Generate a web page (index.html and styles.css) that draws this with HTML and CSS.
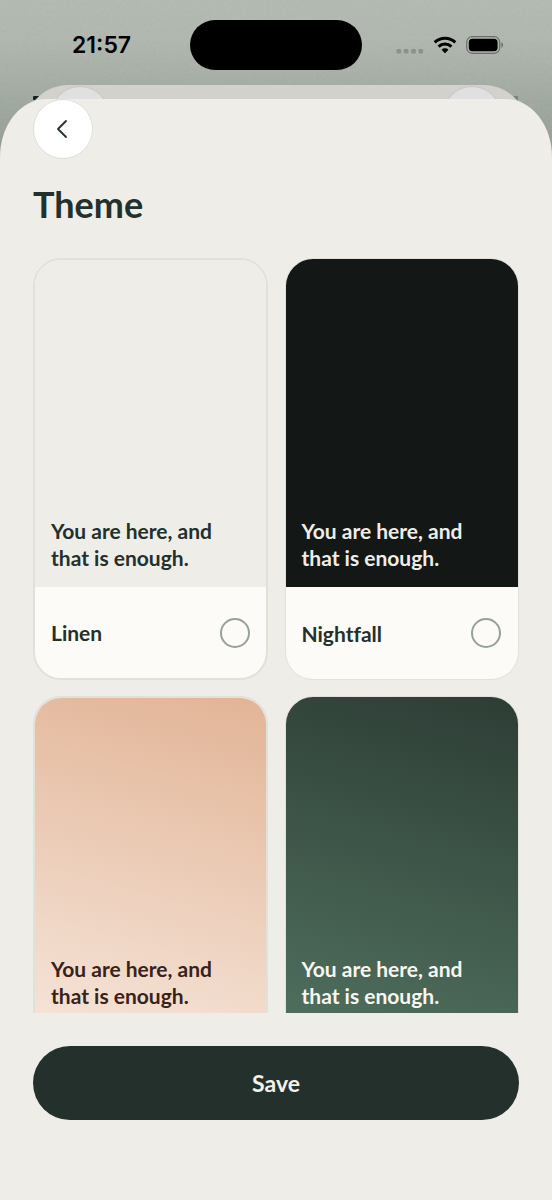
FILE: index.html
```html
<!DOCTYPE html>
<html lang="en">
<head>
<meta charset="utf-8">
<meta name="viewport" content="width=device-width, initial-scale=1">
<title>Theme</title>
<link rel="stylesheet" href="styles.css">
</head>
<body>
<div class="screen">
  <svg class="grain" aria-hidden="true">
    <filter id="grain"><feTurbulence type="fractalNoise" baseFrequency="0.3" numOctaves="2"/><feColorMatrix type="saturate" values="0"/></filter>
    <rect width="100%" height="100%" filter="url(#grain)"/>
  </svg>
  <div class="under-marks" aria-hidden="true"></div>
  <div class="under-sheet" aria-hidden="true"><span class="under-circle"></span><span class="under-circle"></span></div>

  <header class="status">
    <time class="clock">21:57</time>
    <div class="island"></div>
    <div class="status-icons">
      <svg width="28" height="6" viewBox="0 0 28 6" aria-label="No signal"><g fill="#8b928b"><rect x="0.5" y="1" width="4.6" height="4.5" rx="1.2"/><rect x="7.8" y="1" width="4.6" height="4.5" rx="1.2"/><rect x="15.2" y="1" width="4.6" height="4.5" rx="1.2"/><rect x="22.5" y="1" width="4.6" height="4.5" rx="1.2"/></g></svg>
      <svg width="24" height="18" viewBox="0 0 24 18" aria-label="Wi-Fi"><g fill="none" stroke="#000" stroke-width="3"><path d="M1.7 6.4a14.8 14.8 0 0 1 20.6 0"/><path d="M5.6 10.6a9.2 9.2 0 0 1 12.8 0"/></g><path d="M12 17.3l-3.5-3.5a5 5 0 0 1 7 0z"/></svg>
      <svg width="38" height="18" viewBox="0 0 38 18" aria-label="Battery full"><rect x="0.7" y="0.7" width="33" height="16.6" rx="5.5" fill="none" stroke="#687069" stroke-width="1.2"/><rect x="2.8" y="2.8" width="28.8" height="12.4" rx="3.6"/><path d="M35.4 6.3c2.2.8 2.2 4.6 0 5.4z" fill="#687069"/></svg>
    </div>
  </header>

  <main class="sheet">
    <button class="back" type="button" aria-label="Back">
      <svg width="12" height="20" viewBox="0 0 12 20" fill="none" stroke="#23302b" stroke-width="1.8" stroke-linecap="round" stroke-linejoin="round"><path d="M10 2L2 10l8 8"/></svg>
    </button>
    <h1 class="title">Theme</h1>
    <div class="themes">
      <label class="card">
        <span class="preview linen">You are here, and that is enough.</span>
        <span class="choice">Linen<input class="radio" type="radio" name="theme"></span>
      </label>
      <label class="card card-dark">
        <span class="preview nightfall">You are here, and that is enough.</span>
        <span class="choice">Nightfall<input class="radio" type="radio" name="theme"></span>
      </label>
      <label class="card">
        <span class="preview peach">You are here, and that is enough.</span>
      </label>
      <label class="card card-dark">
        <span class="preview forest">You are here, and that is enough.</span>
      </label>
    </div>
    <button class="save" type="button">Save</button>
  </main>
</div>
</body>
</html>
```
FILE: styles.css
```css
* { box-sizing: border-box; }

body {
  margin: 0;
  font-family: Lato, "Noto Sans", sans-serif;
  font-variant-ligatures: none;
  color: #23302b;
}

button { font: inherit; cursor: pointer; }

.screen {
  position: relative;
  display: flex;
  flex-direction: column;
  height: 100vh;
  overflow: hidden;
  background: linear-gradient(#b3bab2 0, #b0b7af 40px, #a0a9a0 100px, #8f998f 170px);
}

.grain {
  position: absolute;
  inset: 0 0 auto;
  width: 100%;
  height: 170px;
  opacity: 0.08;
}

/* Edges of the page and sheet stacked beneath the open sheet */
.under-marks {
  position: absolute;
  top: 96px;
  left: 33px;
  right: 34px;
  height: 4px;
  border: solid #17211d;
  border-width: 0 5px 0 8px;
  border-right-color: #7b847c;
  border-radius: 1px;
}

.under-sheet {
  position: absolute;
  top: 85px;
  left: 22px;
  right: 22px;
  height: 80px;
  display: flex;
  justify-content: space-between;
  padding: 1px 29px;
  background: #d2d1cc;
  border-radius: 46px 46px 0 0 / 50px 50px 0 0;
}

.under-circle {
  width: 58px;
  height: 58px;
  border: 1px solid #c7c6c0;
  border-radius: 50%;
  background: #e0e0e0;
}

.status {
  position: relative;
  display: grid;
  grid-template-columns: 1fr 172px 1fr;
  align-items: center;
  height: 99px;
  padding-bottom: 10px;
  flex: none;
}

.clock {
  padding-left: 72px;
  font: 600 23px/28px Inter, sans-serif;
  color: #000;
}

.island {
  height: 50px;
  border-radius: 25px;
  background: #000;
}

.status-icons {
  display: flex;
  align-items: center;
  justify-content: flex-end;
  gap: 9px;
  padding-right: 48px;
}

.status-icons svg:first-child { margin-top: 12px; }

.sheet {
  position: relative;
  display: flex;
  flex-direction: column;
  flex: 1;
  min-height: 0;
  padding: 0 33px 80px;
  background: #eeede8;
  border-radius: 46px 46px 0 0 / 58px 58px 0 0;
}

.back {
  display: flex;
  align-items: center;
  justify-content: center;
  flex: none;
  width: 60px;
  height: 60px;
  padding: 0 2px 0 0;
  border: 1px solid #e0dfd9;
  border-radius: 50%;
  background: #fff;
}

.title {
  margin: 23px 0 32px;
  font-size: 36px;
  line-height: 44px;
  font-weight: 700;
}

.themes {
  display: grid;
  grid-template-columns: 1fr 1fr;
  align-content: start;
  gap: 16px 17px;
  flex: 1;
  min-height: 0;
  overflow: hidden;
}

.card {
  display: flex;
  flex-direction: column;
  height: 422px;
  overflow: hidden;
  border: 2px solid #e1e0d9;
  border-radius: 28px;
  background: #fcfbf7;
  font-size: 21px;
  line-height: 27px;
  font-weight: 700;
}

.card-dark { border-width: 1px; }

.preview {
  display: flex;
  align-items: flex-end;
  flex: none;
  height: 327px;
  padding: 0 16px 16px;
}

.card-dark .preview { height: 328px; }

.linen { background: #eeede8; }
.nightfall { background: #131716; color: #eeede8; }
.peach { background: linear-gradient(195deg, #e2b496, #f5e4d8); color: #3b2219; }
.forest { background: linear-gradient(195deg, #2d3d35, #4f6f5d); color: #f7f6f1; }

.choice {
  display: flex;
  align-items: center;
  justify-content: space-between;
  flex: 1;
  padding: 0 16px;
}

.card-dark .choice { padding-right: 17px; }

.radio {
  appearance: none;
  width: 30px;
  height: 30px;
  margin: 0;
  border: 2px solid #97a199;
  border-radius: 50%;
}

.radio:checked { background: #23302b; }

.save {
  flex: none;
  height: 74px;
  margin-top: 33px;
  border: 0;
  border-radius: 37px;
  background: #24302c;
  color: #f2f1ec;
  font-size: 23px;
  font-weight: 700;
}
```
